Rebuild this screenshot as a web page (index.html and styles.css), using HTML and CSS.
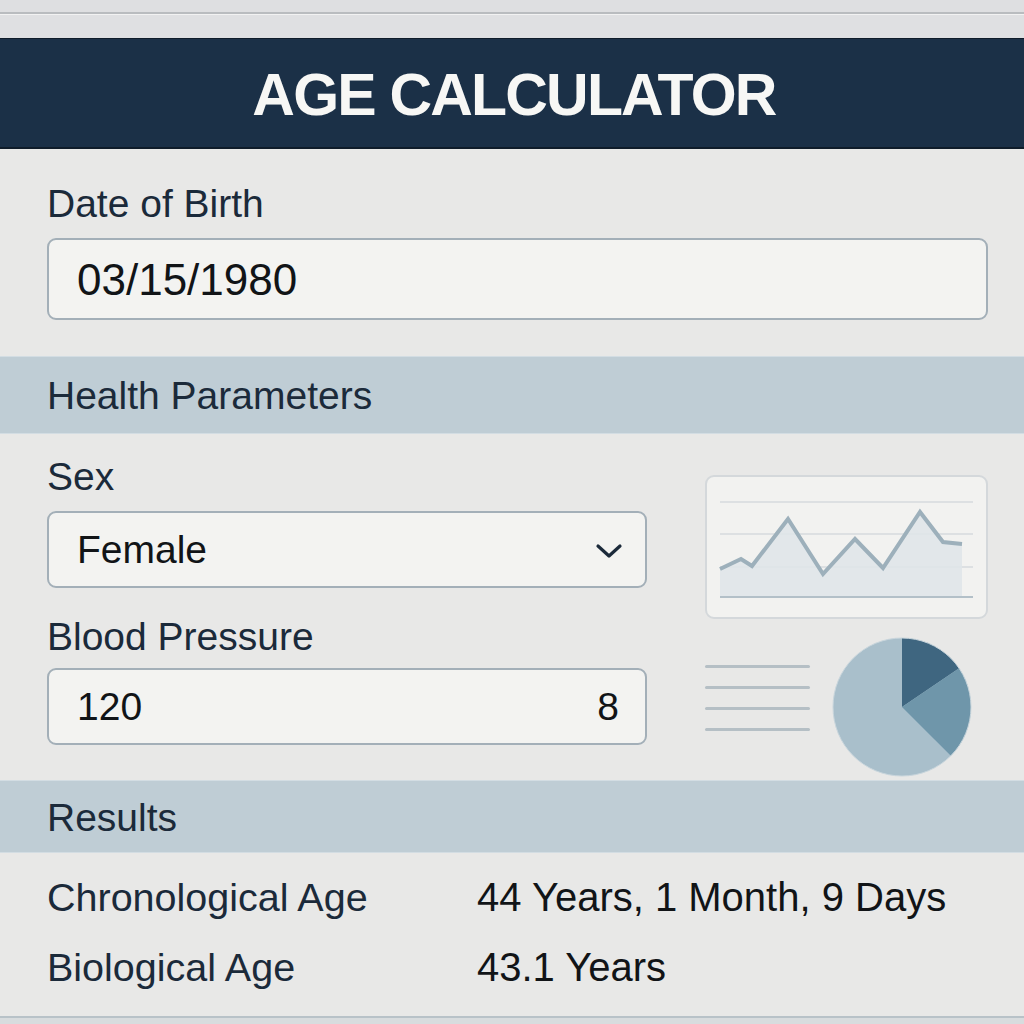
FILE: index.html
```html
<!DOCTYPE html>
<html lang="en">
<head>
<meta charset="utf-8">
<title>Age Calculator</title>
<link rel="stylesheet" href="styles.css">
</head>
<body>
<div class="topstrip"></div>
<div class="topgap"></div>
<header class="titlebar"><h1>AGE CALCULATOR</h1></header>

<section class="block dob">
  <div class="label">Date of Birth</div>
  <div class="field field-wide"><span class="value date">03/15/1980</span></div>
</section>

<div class="band">Health Parameters</div>

<section class="health">
  <div class="form-col">
    <div class="label sex-label">Sex</div>
    <div class="field select">
      <span class="value">Female</span>
      <svg class="chevron" width="28" height="16" viewBox="0 0 28 16"><path d="M3 3 L14 13 L25 3" fill="none" stroke="#1b2a3a" stroke-width="3.2" stroke-linecap="round" stroke-linejoin="round"/></svg>
    </div>
    <div class="label bp-label">Blood Pressure</div>
    <div class="field split">
      <span class="value">120</span>
      <span class="value">8</span>
    </div>
  </div>
  <div class="viz-col">
    <div class="chart-card">
      <svg width="282" height="143" viewBox="0 0 282 143">
        <g stroke="#dde0e2" stroke-width="2">
          <line x1="15" y1="27" x2="268" y2="27"/>
          <line x1="15" y1="59" x2="268" y2="59"/>
          <line x1="15" y1="92" x2="268" y2="92"/>
        </g>
        <polygon points="15,94 36,84 47,91 83,44 118,99 150,64 178,93 215,37 238,67 257,69 257,122 15,122" fill="#dfe5e9" opacity="0.85"/>
        <line x1="15" y1="122" x2="268" y2="122" stroke="#b3c0c8" stroke-width="2"/>
        <polyline points="15,94 36,84 47,91 83,44 118,99 150,64 178,93 215,37 238,67 257,69" fill="none" stroke="#9db0bb" stroke-width="4" stroke-linejoin="miter"/>
      </svg>
    </div>
    <div class="viz-row">
      <div class="legend-lines">
        <span></span><span></span><span></span><span></span>
      </div>
      <svg class="pie" width="142" height="142" viewBox="-71 -71 142 142">
        <circle r="69" fill="#a9bfcb"/>
        <path d="M0 0 L0 -69 A69 69 0 0 1 57.1 -38.7 Z" fill="#3f6680"/>
        <path d="M0 0 L57.1 -38.7 A69 69 0 0 1 48.8 48.8 Z" fill="#6f96aa"/>
        <circle r="69" fill="none" stroke="#c9d6dd" stroke-width="1"/>
      </svg>
    </div>
  </div>
</section>

<div class="band band-results">Results</div>

<section class="results">
  <div class="row"><span class="rlabel">Chronological Age</span><span class="rvalue">44 Years, 1 Month, 9 Days</span></div>
  <div class="row"><span class="rlabel">Biological Age</span><span class="rvalue">43.1 Years</span></div>
</section>
<div class="bottom"></div>
</body>
</html>
```

FILE: styles.css
```css
* { box-sizing: border-box; }
html, body { margin: 0; padding: 0; }
body {
  width: 1024px;
  height: 1024px;
  overflow: hidden;
  background: #e8e8e7;
  font-family: "Liberation Sans", Arial, sans-serif;
  color: #1b2a3a;
}
.topstrip {
  height: 14px;
  background: #dedfe1;
  border-bottom: 2px solid #b9bcbf;
}
.topgap {
  height: 24px;
  background: #dfe0e2;
  border-top: 1px solid #f2f2f2;
}
.titlebar {
  height: 111px;
  background: #1b3047;
  border-top: 1px solid #0f1c2a;
  border-bottom: 2px solid #0f1c2a;
  display: flex;
  align-items: center;
  justify-content: center;
}
.titlebar h1 {
  margin: 0;
  color: #f7f7f5;
  font-size: 59px;
  font-weight: 700;
  letter-spacing: -1.8px;
  line-height: 1;
  padding-top: 4px;
  padding-left: 4px;
}
.label {
  font-size: 39px;
  line-height: 45px;
  color: #1b2a3a;
}
.block.dob {
  padding: 32px 36px 0 47px;
}
.dob .label { margin-bottom: 12px; }
.field {
  background: #f3f3f1;
  border: 2px solid #a3afb8;
  border-radius: 9px;
  display: flex;
  align-items: center;
  padding: 0 26px 0 28px;
  color: #111417;
}
.field-wide {
  height: 82px;
}
.value {
  font-size: 39px;
  line-height: 1;
}
.value.date {
  font-size: 44px;
  padding-top: 2px;
}
.band {
  margin-top: 36px;
  height: 78px;
  background: #bfcdd5;
  border-top: 1px solid #d3dde3;
  border-bottom: 1px solid #d3dde3;
  padding-left: 47px;
  padding-top: 4px;
  font-size: 39px;
  line-height: 70px;
  color: #1b2a3a;
}
.health {
  display: flex;
  gap: 58px;
  padding: 0 36px 0 47px;
}
.form-col {
  width: 601px;
  display: flex;
  flex-direction: column;
}
.sex-label { margin-top: 20px; margin-bottom: 12px; }
.bp-label { margin-top: 26px; margin-bottom: 9px; }
.select, .split {
  height: 77px;
  justify-content: space-between;
}
.chevron { margin-right: -4px; margin-top: 2px; }
.viz-col {
  width: 283px;
  display: flex;
  flex-direction: column;
}
.chart-card {
  margin-top: 41px;
  height: 144px;
  background: #f2f2f0;
  border: 2px solid #d4d8db;
  border-radius: 9px;
  overflow: hidden;
}
.chart-card svg { display: block; margin: -2px 0 0 -2px; }
.viz-row {
  margin-top: 17px;
  display: flex;
  align-items: flex-start;
}
.legend-lines {
  width: 105px;
  margin-top: 29px;
  display: flex;
  flex-direction: column;
  gap: 18px;
}
.legend-lines span {
  display: block;
  height: 3px;
  border-radius: 2px;
  background: #b5bfc5;
}
.pie { margin-left: 21px; display: block; }
.band-results {
  margin-top: 2px;
  height: 73px;
  line-height: 66px;
}
.results {
  padding: 22px 36px 0 47px;
  display: flex;
  flex-direction: column;
  gap: 25px;
}
.row {
  display: flex;
  font-size: 39.5px;
  line-height: 45px;
}
.rlabel { width: 430px; color: #1b2a3a; }
.rvalue { color: #111417; font-size: 40px; }
.bottom {
  margin-top: 26px;
  height: 40px;
  border-top: 2px solid #b8c2c8;
  background: #d8dcde;
}
```
